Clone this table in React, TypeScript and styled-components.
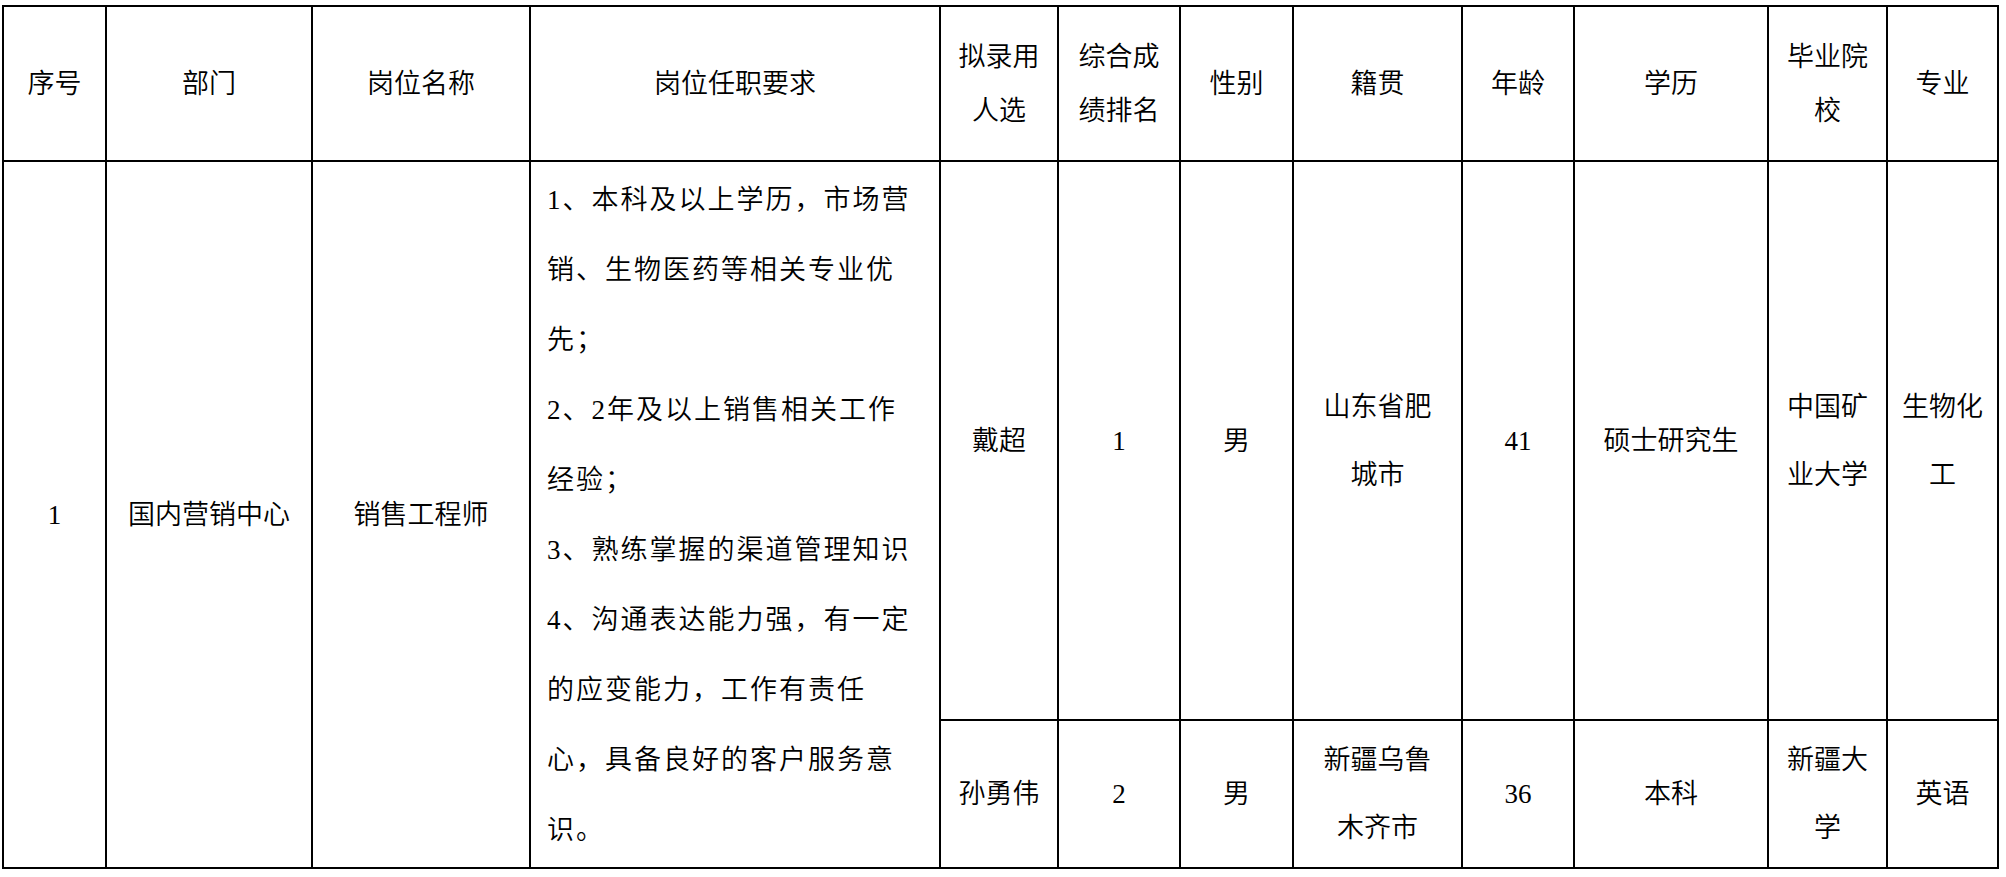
import React from 'react';
import styled, { createGlobalStyle } from 'styled-components';

const GlobalStyle = createGlobalStyle`
  html, body {
    margin: 0;
    padding: 0;
    background: #ffffff;
  }
`;

type Candidate = {
  name: string;
  rank: string;
  gender: string;
  origin: string;
  age: string;
  education: string;
  school: string;
  major: string;
};

const headers = [
  '序号',
  '部门',
  '岗位名称',
  '岗位任职要求',
  '拟录用\n人选',
  '综合成\n绩排名',
  '性别',
  '籍贯',
  '年龄',
  '学历',
  '毕业院\n校',
  '专业',
];

const requirements = [
  '1、本科及以上学历，市场营',
  '销、生物医药等相关专业优',
  '先；',
  '2、2年及以上销售相关工作',
  '经验；',
  '3、熟练掌握的渠道管理知识',
  '4、沟通表达能力强，有一定',
  '的应变能力，工作有责任',
  '心，具备良好的客户服务意',
  '识。',
];

const candidates: Candidate[] = [
  {
    name: '戴超',
    rank: '1',
    gender: '男',
    origin: '山东省肥\n城市',
    age: '41',
    education: '硕士研究生',
    school: '中国矿\n业大学',
    major: '生物化\n工',
  },
  {
    name: '孙勇伟',
    rank: '2',
    gender: '男',
    origin: '新疆乌鲁\n木齐市',
    age: '36',
    education: '本科',
    school: '新疆大\n学',
    major: '英语',
  },
];

const App: React.FC = () => {
  return (
    <>
      <GlobalStyle />
      <Page>
        <Sheet>
          {headers.map((title) => (
            <HeaderCell key={title}>{title}</HeaderCell>
          ))}

          <Cell $rows={2}>1</Cell>
          <Cell $rows={2}>国内营销中心</Cell>
          <Cell $rows={2}>销售工程师</Cell>
          <RequirementCell $rows={2}>
            <Requirements>
              {requirements.map((line, index) => (
                <RequirementLine key={index}>{line}</RequirementLine>
              ))}
            </Requirements>
          </RequirementCell>

          {candidates.map((c) => (
            <React.Fragment key={c.name}>
              <Cell>{c.name}</Cell>
              <Cell>{c.rank}</Cell>
              <Cell>{c.gender}</Cell>
              <Cell>{c.origin}</Cell>
              <Cell>{c.age}</Cell>
              <Cell>{c.education}</Cell>
              <Cell>{c.school}</Cell>
              <Cell>{c.major}</Cell>
            </React.Fragment>
          ))}
        </Sheet>
      </Page>
    </>
  );
};

const Page = styled.div`
  padding: 5px 0 0 2px;
`;

const Sheet = styled.div`
  display: inline-grid;
  grid-template-columns: 101px 204px 216px 408px 116px 120px 111px 167px 110px 192px 117px 109px;
  grid-template-rows: 153px 557px 146px;
  gap: 2px;
  padding: 2px;
  background: #000000;

  font-family: 'Liberation Serif', 'Noto Sans CJK SC', serif;
  font-size: 27px;
  font-weight: 350;
  color: #000000;
`;

const BaseCell = styled.div<{ $rows?: number }>`
  grid-row: span ${({ $rows }) => $rows ?? 1};
  background: #ffffff;
  display: flex;
  align-items: center;
  justify-content: center;
  text-align: center;
  white-space: pre-line;
`;

const HeaderCell = styled(BaseCell)`
  line-height: 54px;
`;

const Cell = styled(BaseCell)`
  line-height: 68px;
`;

const RequirementCell = styled(BaseCell)`
  justify-content: flex-start;
  text-align: left;
  padding-left: 16px;
`;

const Requirements = styled.div`
  display: flex;
  flex-direction: column;
  letter-spacing: 2px;
`;

const RequirementLine = styled.div`
  line-height: 70px;
  white-space: nowrap;
`;

export default App;
